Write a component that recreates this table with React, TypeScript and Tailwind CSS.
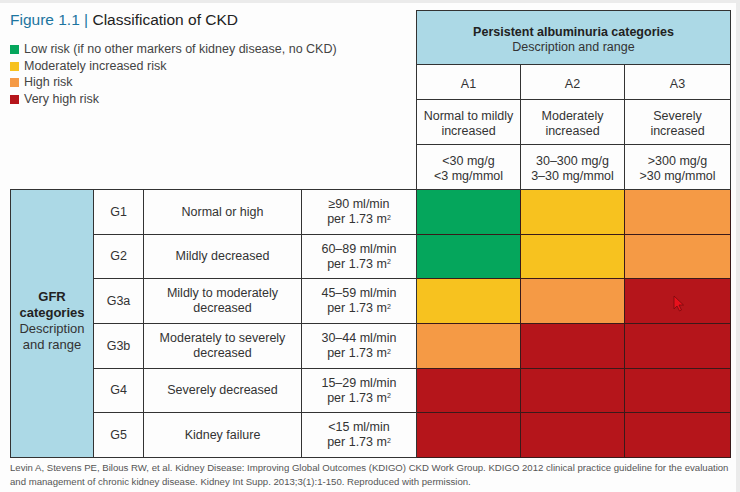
import React from "react";

type Risk = "green" | "yellow" | "orange" | "red";

const riskBg: Record<Risk, string> = {
  green: "bg-[#05a65c]",
  yellow: "bg-[#f7c21f]",
  orange: "bg-[#f59a45]",
  red: "bg-[#b5151b]",
};

const rows: { g: string; desc: string[]; range: string; risks: Risk[] }[] = [
  { g: "G1", desc: ["Normal or high"], range: "≥90 ml/min", risks: ["green", "yellow", "orange"] },
  { g: "G2", desc: ["Mildly decreased"], range: "60–89 ml/min", risks: ["green", "yellow", "orange"] },
  { g: "G3a", desc: ["Mildly to moderately", "decreased"], range: "45–59 ml/min", risks: ["yellow", "orange", "red"] },
  { g: "G3b", desc: ["Moderately to severely", "decreased"], range: "30–44 ml/min", risks: ["orange", "red", "red"] },
  { g: "G4", desc: ["Severely decreased"], range: "15–29 ml/min", risks: ["red", "red", "red"] },
  { g: "G5", desc: ["Kidney failure"], range: "<15 ml/min", risks: ["red", "red", "red"] },
];

const legend: { color: Risk; label: string }[] = [
  { color: "green", label: "Low risk (if no other markers of kidney disease, no CKD)" },
  { color: "yellow", label: "Moderately increased risk" },
  { color: "orange", label: "High risk" },
  { color: "red", label: "Very high risk" },
];

const cell = "border-r border-b border-[#333] flex flex-col items-center justify-center text-center";
const headCell = "border-r border-[#333] flex flex-col items-center justify-center text-center pt-[4px]";

export default function App() {
  return (
    <div
      className="w-[740px] h-[492px] bg-[#ebebeb] pt-[3px] pr-[4px] overflow-hidden text-[#333]"
      style={{ fontFamily: '"Liberation Sans", Arial, sans-serif' }}
    >
      <div className="relative h-full bg-[#fdfdfd]">
        {/* Top: title + legend, albuminuria header */}
        <div className="flex pt-[7px]">
          <div className="w-[416px] pl-[10px]">
            <h1 className="text-[15.5px] leading-[20px] text-[#222]">
              <span className="text-[#1c75a0]">Figure 1.1 |</span> Classification of CKD
            </h1>
            <ul className="mt-[11px] text-[12.5px] leading-[16.7px] text-[#444]">
              {legend.map((l) => (
                <li key={l.label} className="flex items-center gap-[5px]">
                  <span className={`w-[9px] h-[9px] ${riskBg[l.color]}`} />
                  {l.label}
                </li>
              ))}
            </ul>
          </div>

          <div className="w-[315px] border-l border-t border-[#333] grid grid-cols-[104px_104px_106px] grid-rows-[54px_35px_45px_44px] text-[12.5px] leading-[15px]">
            <div className={`${headCell} border-b col-span-3 bg-[#acd9e6]`}>
              <span className="font-bold text-[#222]">Persistent albuminuria categories</span>
              <span>Description and range</span>
            </div>
            <div className={`${headCell} border-b`}>A1</div>
            <div className={`${headCell} border-b`}>A2</div>
            <div className={`${headCell} border-b`}>A3</div>
            <div className={`${headCell} border-b`}>
              <span>Normal to mildly</span>
              <span>increased</span>
            </div>
            <div className={`${headCell} border-b`}>
              <span>Moderately</span>
              <span>increased</span>
            </div>
            <div className={`${headCell} border-b`}>
              <span>Severely</span>
              <span>increased</span>
            </div>
            <div className={headCell}>
              <span>&lt;30 mg/g</span>
              <span>&lt;3 mg/mmol</span>
            </div>
            <div className={headCell}>
              <span>30–300 mg/g</span>
              <span>3–30 mg/mmol</span>
            </div>
            <div className={headCell}>
              <span>&gt;300 mg/g</span>
              <span>&gt;30 mg/mmol</span>
            </div>
          </div>
        </div>

        {/* GFR grid */}
        <div className="ml-[10px] w-[721px] border-l border-t border-[#333] grid grid-cols-[83px_50px_158px_115px_104px_104px_106px] grid-rows-[45px_44px_45px_45px_44px_45px] text-[12.5px] leading-[15px]">
          <div className={`${cell} row-span-6 bg-[#acd9e6] text-[13px] leading-[16px] pb-[6px]`}>
            <span className="font-bold text-[#222]">GFR</span>
            <span className="font-bold text-[#222]">categories</span>
            <span>Description</span>
            <span>and range</span>
          </div>
          {rows.map((r) => (
            <React.Fragment key={r.g}>
              <div className={cell}>{r.g}</div>
              <div className={cell}>
                {r.desc.map((d) => (
                  <span key={d}>{d}</span>
                ))}
              </div>
              <div className={cell}>
                <span>{r.range}</span>
                <span>
                  per 1.73 m<sup className="text-[7px]">2</sup>
                </span>
              </div>
              {r.risks.map((k, i) => (
                <div key={i} className={`border-r border-b border-[#3a1a1a] ${riskBg[k]}`} />
              ))}
            </React.Fragment>
          ))}
        </div>

        {/* Source */}
        <p className="pl-[10px] pt-[3px] text-[9.6px] leading-[14px] text-[#555]">
          Levin A, Stevens PE, Bilous RW, et al. Kidney Disease: Improving Global Outcomes (KDIGO) CKD Work Group. KDIGO 2012 clinical practice guideline for the evaluation
          <br />
          and management of chronic kidney disease. Kidney Int Supp. 2013;3(1):1-150. Reproduced with permission.
        </p>

        {/* mouse pointer */}
        <svg className="absolute left-[673px] top-[292px]" width="12" height="17" viewBox="0 0 12 17">
          <path d="M1 1 L1 14 L4 11 L6.5 16 L8.5 15 L6 10 L10.5 10 Z" fill="#e8101c" stroke="#7a0a0e" strokeWidth="0.8" strokeLinejoin="round" />
        </svg>
      </div>
    </div>
  );
}
